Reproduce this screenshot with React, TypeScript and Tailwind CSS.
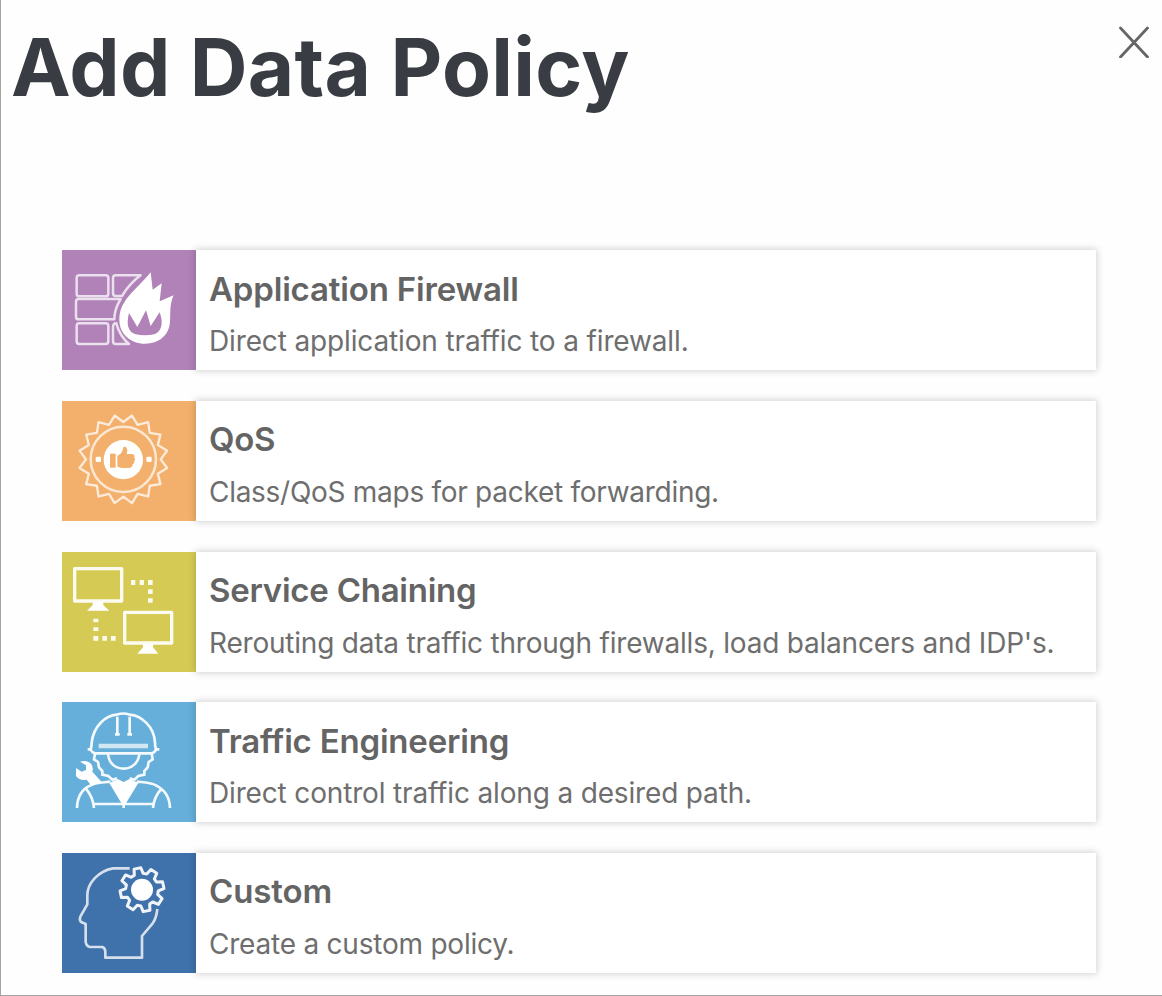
import type { ReactNode } from "react";

const point = (cx: number, cy: number, r: number, deg: number) => {
  const a = ((deg - 90) * Math.PI) / 180;
  return `${(cx + r * Math.cos(a)).toFixed(1)},${(cy + r * Math.sin(a)).toFixed(1)}`;
};

const sealPoints = Array.from({ length: 32 }, (_, i) =>
  point(221, 207, i % 2 ? 134 : 112, i * 11.25),
).join(" ");

const gearPoints = Array.from({ length: 8 }, (_, i) => {
  const a = -12 + i * 45;
  return [
    point(277, 148, 49, a - 16),
    point(277, 148, 66, a - 9),
    point(277, 148, 66, a + 9),
    point(277, 148, 49, a + 16),
  ].join(" ");
}).join(" ");

function FirewallIcon() {
  return (
    <svg viewBox="37 30 402 360" className="h-full w-full" fill="none" stroke="#fff">
      <g strokeWidth="7.5" strokeOpacity="0.75" strokeLinejoin="round">
        <rect x="81" y="106" width="95" height="63" rx="8" />
        <path d="M217 168h-19q-8 0-8-8v-46q0-8 8-8h75Q240 130 217 168Z" />
        <path d="M213 177H87q-8 0-8 8v45q0 8 8 8h107q0-30 19-61Z" />
        <rect x="81" y="250" width="95" height="62" rx="8" />
        <path d="M190 262q0-12 10-12 10 38 38 62h-40q-8 0-8-8Z" />
      </g>
      <path
        fill="#fff"
        stroke="none"
        fillRule="evenodd"
        d="M303 97 309 149 336 130 330 184 372 166 C359 193 363 219 361 246 C358 286 328 311 286 311 C242 311 209 281 209 239 C209 180 256 154 303 97Z M238 219 C229 255 236 276 258 283 Q286 289 314 283 C336 274 342 251 330 217 L303 258 289 211 263 261Z"
      />
    </svg>
  );
}

function QosIcon() {
  return (
    <svg viewBox="37 32 402 360" className="h-full w-full" fill="none" stroke="#fff">
      <polygon points={sealPoints} strokeWidth="7" strokeOpacity="0.75" strokeLinejoin="round" />
      <circle cx="221" cy="207" r="98" strokeWidth="7.5" strokeOpacity="0.7" />
      <g stroke="none" fill="#fff">
        <circle cx="221" cy="208" r="59" />
        <rect x="138" y="199" width="16" height="16" rx="4" />
        <rect x="290" y="199" width="16" height="16" rx="4" />
      </g>
      <g stroke="none" fill="#f3b06c">
        <rect x="181" y="190" width="17" height="42" />
        <path d="M203 196 C215 191 219 184 220 174 Q222 166 228 170 C236 176 232 186 231 191 H248 Q257 193 254 202 Q259 207 254 213 Q255 219 249 222 Q249 232 239 233 H217 Q208 233 203 228Z" />
      </g>
    </svg>
  );
}

function ChainingIcon() {
  return (
    <svg viewBox="37 34 402 360" className="h-full w-full" fill="#fff">
      <g fill="none" stroke="#fff" strokeWidth="10" strokeLinejoin="round" strokeOpacity="0.92">
        <rect x="75" y="84" width="141" height="97" />
        <rect x="225" y="215" width="141" height="92" />
      </g>
      <path d="M129 183h32v11l18 16h-67l17-16Z" />
      <path d="M280 310h30v10l16 19h-63l17-19Z" />
      <g fillOpacity="0.9">
        <path d="M244 118h13v15h-13ZM270 118h13v15h-13ZM295 118h14v15h-14ZM295 146h14v14h-14ZM295 173h14v13h-14Z" />
        <path d="M131 234h15v11h-15ZM131 260h15v11h-15ZM131 286h15v14h-15ZM158 286h14v14h-14ZM184 286h14v14h-14Z" />
      </g>
    </svg>
  );
}

function EngineeringIcon() {
  return (
    <svg viewBox="37 36 402 360" className="h-full w-full" fill="none" stroke="#fff" strokeWidth="8" strokeOpacity="0.92">
      <path d="M114 178h9q3-11 3-20C131 109 168 76 201 74q20-7 39 0C274 77 314 109 316 158q0 12 3 20h10" />
      <path d="M122 176Q127 190 139 190H303Q316 190 320 176" />
      <path d="M203 80v56M240 80v56M196 133h14M233 133h14" />
      <path d="M147 168h148" strokeWidth="13" strokeOpacity="0.7" />
      <path d="M175 193C178 220 197 236 222 236S266 218 269 193" />
      <path d="M136 191 133 208 145 216 148 232 158 243 158 254 176 258 188 269 202 265M306 191 309 208 297 216 294 232 284 243 284 254 266 258 254 269 240 265" />
      <path d="M82 354C83 319 98 296 125 285 144 276 164 278 182 275M261 275C280 277 300 276 319 286 347 300 360 322 361 354" />
      <path d="M108 295Q130 320 133 354M335 297Q313 320 310 354M133 342H310" />
      <path d="M179 279 204 267 222 276 240 267 266 279 222 351Z" fill="#fff" stroke="none" />
      <path d="M222 332v22" />
      <path
        d="M91 215q22-7 34 8 7 10 3 22l30 33q-20 1-33 9l-14-18q-21 4-32-11v-24l17 11 13-5 0-14Z"
        fill="#fff"
        stroke="none"
      />
    </svg>
  );
}

function CustomIcon() {
  return (
    <svg viewBox="37 38 402 360" className="h-full w-full" fill="none" stroke="#fff">
      <path
        d="M240 84H190C147 91 113 129 113 165V192L92 229Q88 241 96 246L108 251V305Q111 319 121 320H158Q167 324 167 334V352H277V287L309 249Q320 234 323 206"
        strokeWidth="8"
        strokeOpacity="0.78"
        strokeLinejoin="round"
      />
      <polygon points={gearPoints} strokeWidth="9" strokeLinejoin="round" strokeOpacity="0.92" />
      <circle cx="277" cy="148" r="33" fill="#fff" stroke="none" />
    </svg>
  );
}

type Policy = { title: string; titleClass: string; text: string; textClass: string; color: string; icon: ReactNode };

const policies: Policy[] = [
  { title: "Application Firewall", titleClass: "tracking-[-0.17px]", text: "Direct application traffic to a firewall.", textClass: "tracking-[-0.14px]", color: "bg-[#b082b8]", icon: <FirewallIcon /> },
  { title: "QoS", titleClass: "tracking-[-0.3px]", text: "Class/QoS maps for packet forwarding.", textClass: "tracking-[-0.28px]", color: "bg-[#f3b06c]", icon: <QosIcon /> },
  { title: "Service Chaining", titleClass: "tracking-[-0.25px]", text: "Rerouting data traffic through firewalls, load balancers and IDP's.", textClass: "tracking-[-0.21px]", color: "bg-[#d5cb54]", icon: <ChainingIcon /> },
  { title: "Traffic Engineering", titleClass: "tracking-[-0.2px]", text: "Direct control traffic along a desired path.", textClass: "tracking-[-0.16px]", color: "bg-[#65afda]", icon: <EngineeringIcon /> },
  { title: "Custom", titleClass: "tracking-[-0.1px]", text: "Create a custom policy.", textClass: "tracking-[-0.22px]", color: "bg-[#3f71aa]", icon: <CustomIcon /> },
];

export default function App() {
  return (
    <main className="h-[996px] w-[1162px] overflow-hidden border-b border-l border-[#a3a3a3] bg-[#fefefe] font-['Inter',sans-serif]">
      <header className="flex h-[249px] items-start justify-between pl-[10px] pr-[12px]">
        <h1 className="mt-[18px] whitespace-nowrap text-[80px] font-bold leading-[97px] tracking-[0.28px] text-[#393c42]">
          Add Data Policy
        </h1>
        <button type="button" aria-label="Close" className="mt-[26px] h-8 w-8">
          <svg viewBox="0 0 32 32" className="h-full w-full" fill="none" stroke="#666" strokeWidth="2.8" strokeLinecap="round">
            <path d="M2.5 2 29.5 31M29.5 2 2.5 31" />
          </svg>
        </button>
      </header>
      <ul className="flex flex-col gap-[30.65px] pl-[61px] pt-[1.3px]">
        {policies.map((p) => (
          <li key={p.title} className="flex h-[120px]">
            <div className={`h-[120px] w-[134px] shrink-0 ${p.color}`}>{p.icon}</div>
            <div className="h-[120px] w-[900px] whitespace-nowrap bg-white pl-[13px] pt-[17.5px] shadow-[0_0_7px_1px_rgba(0,0,0,0.18)]">
              <h2 className={`text-[33px] font-semibold leading-[42px] text-[#646464] ${p.titleClass}`}>{p.title}</h2>
              <p className={`mt-[14.5px] text-[28px] leading-[34px] text-[#6e6e6e] ${p.textClass}`}>{p.text}</p>
            </div>
          </li>
        ))}
      </ul>
    </main>
  );
}
